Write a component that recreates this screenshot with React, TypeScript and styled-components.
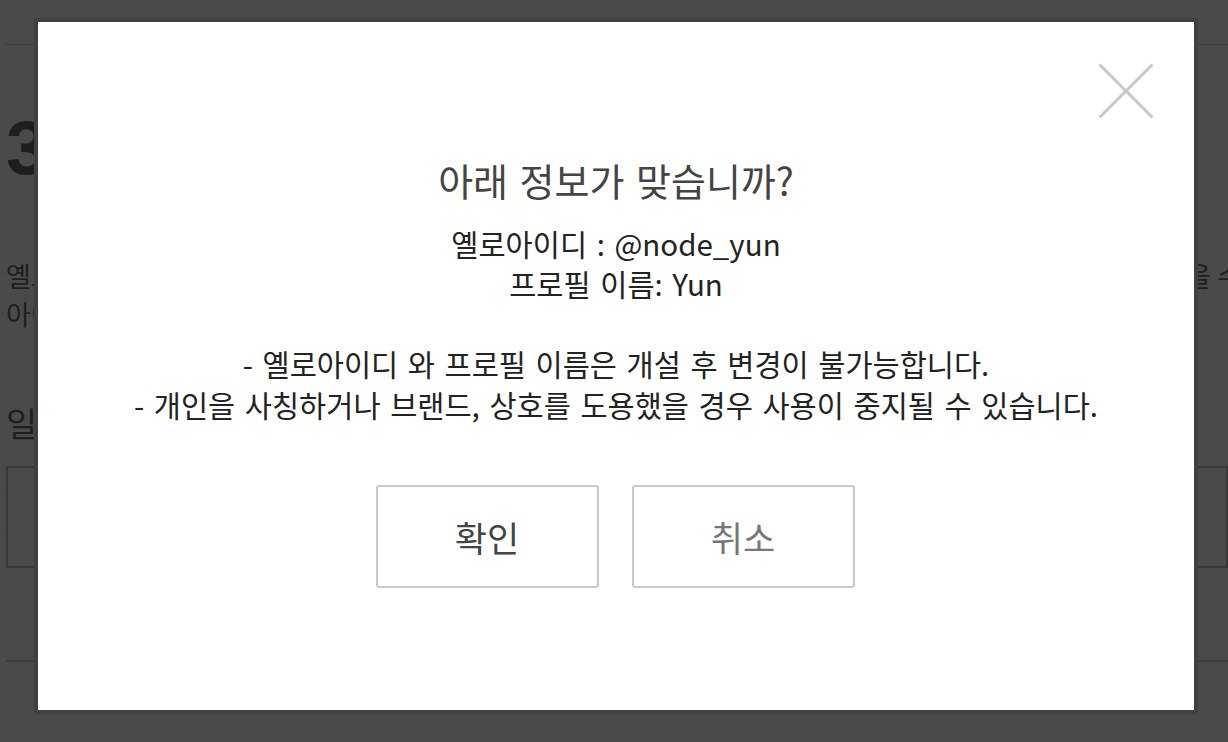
import React from "react";
import styled, { createGlobalStyle } from "styled-components";

const GlobalStyle = createGlobalStyle`
  html, body { margin: 0; padding: 0; }
  body {
    font-family: "Noto Sans CJK KR", "Noto Sans", sans-serif;
    background: #f7f7f7;
  }
  * { box-sizing: border-box; }
`;

const Page = styled.div`
  width: 1228px;
  height: 742px;
  overflow: hidden;
  padding-left: 6px;
  background-color: #f7f7f7;
  background-image: radial-gradient(circle, #e6e6e6 0.8px, transparent 1.4px);
  background-size: 20px 20px;
  background-position: -7px 3px;
  color: #666;
`;

const Header = styled.div`
  height: 45px;
  border-bottom: 1px solid #c8c8c8;
`;

const StepTitle = styled.h1`
  margin: 63px 0 0;
  font-family: "Liberation Sans", "Noto Sans CJK KR", sans-serif;
  font-size: 76px;
  line-height: 80px;
  font-weight: 700;
  color: #666;
  white-space: nowrap;
`;

const Paragraph = styled.div`
  margin-top: 69px;
  margin-right: -14px;
  font-size: 27px;
  line-height: 37.5px;
  color: #6a6a6a;
`;

const ParaRow = styled.div`
  display: flex;
  justify-content: space-between;
  white-space: nowrap;
  overflow: hidden;
`;

const SubTitle = styled.h2`
  margin: 71px 0 0;
  font-size: 34px;
  line-height: 40px;
  font-weight: 400;
  color: #666;
`;

const InputBox = styled.div`
  margin-top: 23px;
  height: 102px;
  border: 2px solid #bcbcbc;
  background: #f7f7f7;
`;

const FooterLine = styled.div`
  margin-top: 92px;
  border-top: 2px solid #c8c8c8;
`;

const Overlay = styled.div`
  position: fixed;
  inset: 0;
  background: rgba(0, 0, 0, 0.7);
  display: flex;
  align-items: flex-start;
  padding: 18px 0 0 34px;
`;

const Modal = styled.div`
  position: relative;
  width: 1164px;
  height: 696px;
  border: 4px solid #414141;
  background: #fff;
  display: flex;
  flex-direction: column;
  align-items: center;
  padding-top: 135px;
`;

const CloseButton = styled.button`
  position: absolute;
  top: 41px;
  right: 40px;
  width: 56px;
  height: 56px;
  padding: 0;
  border: none;
  background: transparent;
  cursor: pointer;
  display: block;
`;

const Title = styled.h2`
  margin: 0;
  font-size: 38px;
  line-height: 46px;
  font-weight: 400;
  color: #444;
  text-align: center;
  word-spacing: 3px;
  white-space: nowrap;
`;

const Body = styled.p`
  margin: 19.5px 0 0;
  font-size: 29.5px;
  line-height: 40.3px;
  color: #222;
  text-align: center;
  word-spacing: 3px;
  white-space: nowrap;
`;

const Buttons = styled.div`
  margin-top: 61px;
  margin-right: 2px;
  display: flex;
  gap: 33px;
`;

const ActionButton = styled.button<{ $muted?: boolean }>`
  width: 223px;
  height: 103px;
  border: 2px solid #c9c9c9;
  border-radius: 3px;
  background: #fff;
  font-family: "Noto Sans CJK KR", sans-serif;
  font-size: 35px;
  color: ${(p) => (p.$muted ? "#777" : "#444")};
  cursor: pointer;
  display: flex;
  align-items: center;
  justify-content: center;
  padding: 0;
`;

const CloseIcon = () => (
  <svg width="56" height="56" viewBox="0 0 56 56" aria-hidden="true">
    <line x1="1.5" y1="1.5" x2="54.5" y2="54.5" stroke="#c8c8c8" strokeWidth="3" />
    <line x1="54.5" y1="1.5" x2="1.5" y2="54.5" stroke="#c8c8c8" strokeWidth="3" />
  </svg>
);

export default function App() {
  return (
    <>
      <GlobalStyle />
      <Page>
        <Header />
        <StepTitle>3. 옐로아이디 만들기</StepTitle>
        <Paragraph>
          <ParaRow>
            <span>옐로아이디와 프로필 이름을 입력해 주세요.</span>
            <span>이름을 수</span>
          </ParaRow>
          <ParaRow>
            <span>아이디는 영문, 숫자만 사용할 수 있습니다.</span>
          </ParaRow>
        </Paragraph>
        <SubTitle>일반 정보</SubTitle>
        <InputBox />
        <FooterLine />
      </Page>
      <Overlay>
        <Modal role="dialog" aria-modal="true">
          <CloseButton aria-label="닫기">
            <CloseIcon />
          </CloseButton>
          <Title>아래 정보가 맞습니까?</Title>
          <Body>
            옐로아이디 : @node_yun
            <br />
            프로필 이름: Yun
            <br />
            <br />
            - 옐로아이디 와 프로필 이름은 개설 후 변경이 불가능합니다.
            <br />
            - 개인을 사칭하거나 브랜드, 상호를 도용했을 경우 사용이 중지될 수 있습니다.
          </Body>
          <Buttons>
            <ActionButton>확인</ActionButton>
            <ActionButton $muted>취소</ActionButton>
          </Buttons>
        </Modal>
      </Overlay>
    </>
  );
}
